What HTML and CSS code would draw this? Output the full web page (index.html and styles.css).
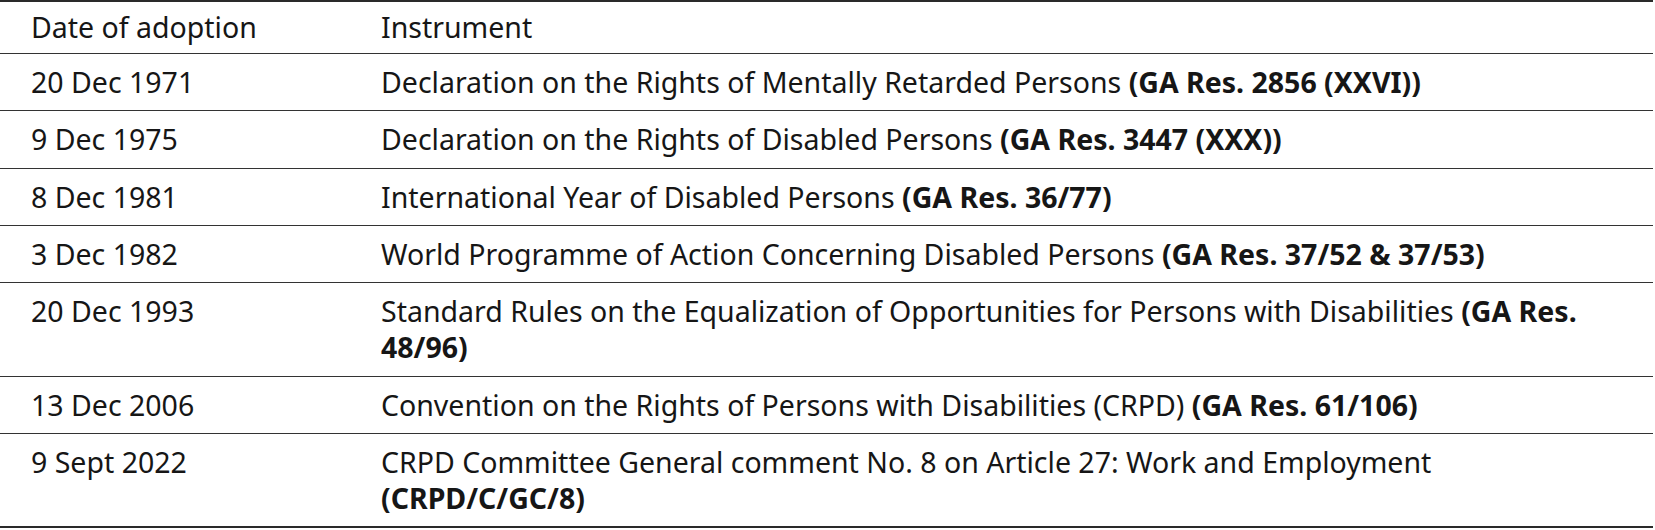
FILE: index.html
```html
<!DOCTYPE html>
<html>
<head>
<meta charset="utf-8">
<link rel="stylesheet" href="styles.css">
</head>
<body>
<table class="tbl">
  <thead>
    <tr><th class="c-date">Date of adoption</th><th>Instrument</th></tr>
  </thead>
  <tbody>
    <tr><td>20 Dec 1971</td><td>Declaration on the Rights of Mentally Retarded Persons <b>(GA Res. 2856 (XXVI))</b></td></tr>
    <tr><td>9 Dec 1975</td><td>Declaration on the Rights of Disabled Persons <b>(GA Res. 3447 (XXX))</b></td></tr>
    <tr><td>8 Dec 1981</td><td>International Year of Disabled Persons <b>(GA Res. 36/77)</b></td></tr>
    <tr><td>3 Dec 1982</td><td>World Programme of Action Concerning Disabled Persons <b>(GA Res. 37/52 &amp; 37/53)</b></td></tr>
    <tr><td>20 Dec 1993</td><td>Standard Rules on the Equalization of Opportunities for Persons with Disabilities <b>(GA Res. 48/96)</b></td></tr>
    <tr><td>13 Dec 2006</td><td>Convention on the Rights of Persons with Disabilities (CRPD) <b>(GA Res. 61/106)</b></td></tr>
    <tr><td>9 Sept 2022</td><td>CRPD Committee General comment No. 8 on Article 27: Work and Employment <b>(CRPD/C/GC/8)</b></td></tr>
  </tbody>
</table>
</body>
</html>
```
FILE: styles.css
```css
html, body {
  margin: 0;
  padding: 0;
  background: #fff;
}
body {
  font-family: "Noto Sans", Lato, sans-serif;
  color: #161616;
}
.tbl {
  width: 1653px;
  border-collapse: collapse;
  border-top: 2px solid #2a2a2a;
  border-bottom: 2px solid #2a2a2a;
  font-size: 28.5px;
  line-height: 36px;
}
.tbl th, .tbl td {
  text-align: left;
  vertical-align: top;
  font-weight: normal;
  padding: 10.2px 31px 10.2px 31px;
  border-bottom: 1px solid #333;
}
.tbl th {
  padding-top: 7.4px;
  padding-bottom: 7.4px;
}
.tbl th.c-date, .tbl td:first-child {
  width: 288px;
}
.tbl b {
  font-weight: bold;
}
```
